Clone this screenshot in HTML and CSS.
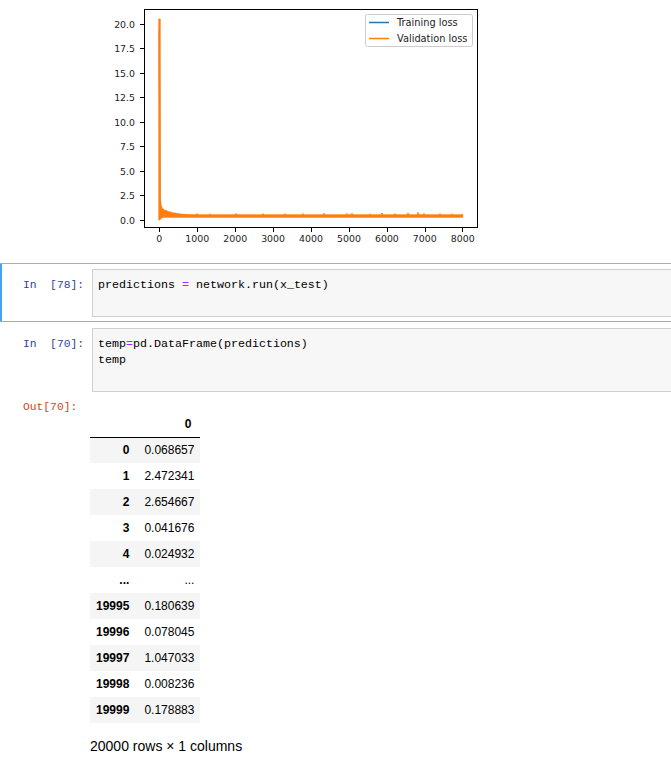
FILE: index.html
```html
<!DOCTYPE html>
<html>
<head>
<meta charset="utf-8">
<link rel="stylesheet" href="styles.css">
</head>
<body>
<div class="fig-out">
  <svg class="plot" width="400" height="255" viewBox="90 0 400 255">
    <rect x="144.5" y="9.5" width="333" height="218" fill="#fff" stroke="#000" stroke-width="1"/>
    <g stroke="#000" stroke-width="1">
      <line x1="140" y1="24.5" x2="144" y2="24.5"/>
      <line x1="140" y1="48.5" x2="144" y2="48.5"/>
      <line x1="140" y1="73.5" x2="144" y2="73.5"/>
      <line x1="140" y1="97.5" x2="144" y2="97.5"/>
      <line x1="140" y1="122.5" x2="144" y2="122.5"/>
      <line x1="140" y1="146.5" x2="144" y2="146.5"/>
      <line x1="140" y1="171.5" x2="144" y2="171.5"/>
      <line x1="140" y1="195.5" x2="144" y2="195.5"/>
      <line x1="140" y1="220.5" x2="144" y2="220.5"/>
      <line x1="159.5" y1="228" x2="159.5" y2="232"/>
      <line x1="197.5" y1="228" x2="197.5" y2="232"/>
      <line x1="235.5" y1="228" x2="235.5" y2="232"/>
      <line x1="273.5" y1="228" x2="273.5" y2="232"/>
      <line x1="311.5" y1="228" x2="311.5" y2="232"/>
      <line x1="349.5" y1="228" x2="349.5" y2="232"/>
      <line x1="387.5" y1="228" x2="387.5" y2="232"/>
      <line x1="425.5" y1="228" x2="425.5" y2="232"/>
      <line x1="462.5" y1="228" x2="462.5" y2="232"/>
    </g>
    <g class="ylab" text-anchor="end">
      <text x="135" y="27.5">20.0</text>
      <text x="135" y="52">17.5</text>
      <text x="135" y="76.5">15.0</text>
      <text x="135" y="101">12.5</text>
      <text x="135" y="125.5">10.0</text>
      <text x="135" y="150">7.5</text>
      <text x="135" y="174.5">5.0</text>
      <text x="135" y="199">2.5</text>
      <text x="135" y="223.5">0.0</text>
    </g>
    <g class="xlab" text-anchor="middle">
      <text x="159.3" y="242">0</text>
      <text x="197.2" y="242">1000</text>
      <text x="235.2" y="242">2000</text>
      <text x="273.1" y="242">3000</text>
      <text x="311" y="242">4000</text>
      <text x="349" y="242">5000</text>
      <text x="386.9" y="242">6000</text>
      <text x="424.8" y="242">7000</text>
      <text x="462.7" y="242">8000</text>
    </g>
    <polyline fill="none" stroke="#1f77b4" stroke-width="1.2" points="159.3,30 159.8,200 161,209 165,212 175,214 190,215.5 462.7,215.8"/>
    <path fill="#ff7f0e" stroke="#ff7f0e" stroke-width="0.8" stroke-linejoin="round" d="M158.8,220 L158.8,19 L160.2,19 L160.4,196 L160.8,203 L161.3,206 L162,207.5 L163,209 L164,209.5 L165,210.5 L166,210 L167,211.5 L168,211 L169,212 L170,212.3 L171,211.8 L172,212.8 L174,213 L176,213.2 L178,213.8 L180,214 L183,214.4 L186,214.6 L196,214.8 L197,213.5 L198,214.8 L209,214.8 L210,213.8 L211,214.8 L235,214.8 L236,213.3 L237,214.8 L262,214.8 L263,213.5 L264,214.8 L284,214.8 L285,213.6 L286,214.8 L302,214.8 L303,213.4 L304,214.8 L323,214.8 L324,213.2 L325,214.8 L346,214.8 L347,213.5 L348,214.8 L351,214.8 L352,213.2 L353,214.8 L369,214.8 L370,213.8 L371,214.8 L381,214.8 L382,213 L383,214.8 L394,214.8 L395,213.5 L396,214.8 L407,214.8 L408,212.8 L409,214.8 L417,214.8 L418,212.3 L419,214.8 L423,214.8 L424,213.3 L425,214.8 L439,214.8 L440,213.6 L441,214.8 L451,214.8 L452,213.7 L453,214.8 L461,214.8 L462,214 L462.7,214.8 L462.7,217.3 L163,217.3 L161,218.5 L159.8,220 Z"/>
    <rect x="365.5" y="14.5" width="107" height="32" rx="2" fill="#fff" fill-opacity="0.8" stroke="#ccc" stroke-width="1"/>
    <line x1="369" y1="22.5" x2="389" y2="22.5" stroke="#1f77b4" stroke-width="1.5"/>
    <line x1="369" y1="38.5" x2="389" y2="38.5" stroke="#ff7f0e" stroke-width="1.5"/>
    <text class="leg" x="397" y="26">Training loss</text>
    <text class="leg" x="397" y="42">Validation loss</text>
  </svg>
</div>

<div class="cell selected">
  <div class="prompt in-prompt">In&nbsp; [78]:</div>
  <div class="input"><pre>predictions <span class="op">=</span> network.run(x_test)</pre></div>
</div>

<div class="cell">
  <div class="prompt in-prompt">In&nbsp; [70]:</div>
  <div class="input"><pre>temp<span class="op">=</span>pd.DataFrame(predictions)
temp</pre></div>
</div>

<div class="output">
  <div class="prompt out-prompt">Out[70]:</div>
  <div class="out-body">
    <table class="df">
      <thead>
        <tr><th class="idx"></th><th class="col">0</th></tr>
      </thead>
      <tbody>
        <tr><th>0</th><td>0.068657</td></tr>
        <tr><th>1</th><td>2.472341</td></tr>
        <tr><th>2</th><td>2.654667</td></tr>
        <tr><th>3</th><td>0.041676</td></tr>
        <tr><th>4</th><td>0.024932</td></tr>
        <tr class="dots"><th>...</th><td>...</td></tr>
        <tr><th>19995</th><td>0.180639</td></tr>
        <tr><th>19996</th><td>0.078045</td></tr>
        <tr><th>19997</th><td>1.047033</td></tr>
        <tr><th>19998</th><td>0.008236</td></tr>
        <tr><th>19999</th><td>0.178883</td></tr>
      </tbody>
    </table>
    <p class="shape">20000 rows × 1 columns</p>
  </div>
</div>
</body>
</html>
```

FILE: styles.css
```css
html, body {
  margin: 0;
  padding: 0;
  background: #fff;
}

body {
  width: 671px;
  overflow: hidden;
  font-family: "Liberation Sans", Arial, sans-serif;
  color: #000;
}

.fig-out {
  height: 263px;
  padding-left: 90px;
}

.plot {
  display: block;
}

.plot text {
  font-family: "DejaVu Sans", sans-serif;
  fill: #222;
}

.ylab text, .xlab text {
  font-size: 9.4px;
}

.leg {
  font-size: 9.8px;
}

.cell {
  display: flex;
  border-top: 1px solid transparent;
  border-bottom: 1px solid transparent;
  padding: 5px 0 4px 0;
}

.cell.selected {
  border-top-color: #ababab;
  border-bottom-color: #ababab;
  box-shadow: inset 2px 0 0 #42a5f5;
}

.prompt {
  width: 92px;
  flex: none;
  box-sizing: border-box;
  padding-left: 23px;
  font-family: "Liberation Mono", monospace;
  font-size: 11.3px;
  line-height: 16px;
  white-space: pre;
}

.in-prompt {
  color: #303f9f;
  padding-top: 8px;
}

.out-prompt {
  color: #d84315;
  padding-top: 2px;
  width: 90px;
}

.input {
  flex: 1;
  background: #f7f7f7;
  border: 1px solid #cfcfcf;
  border-right: none;
  padding: 7px 0 23px 5px;
}

.input pre {
  margin: 0;
  font-family: "Liberation Mono", monospace;
  font-size: 11.67px;
  line-height: 16px;
  color: #000;
}

.op {
  color: #aa22ff;
}

.output {
  display: flex;
  padding-top: 0;
}

.out-body {
  padding-top: 14px;
}

.df {
  border-collapse: collapse;
  font-size: 12px;
  color: #000;
}

.df th, .df td {
  height: 26px;
  padding: 0 6px;
  text-align: right;
  vertical-align: middle;
  box-sizing: border-box;
}

.df th.idx {
  width: 48px;
}

.df tbody th {
  padding-right: 9px;
}

.df td {
  width: 61px;
}

.df thead th {
  border-bottom: 1px solid #000;
  font-weight: bold;
}

.df thead th.col {
  padding-right: 9px;
}

.df tbody th {
  font-weight: bold;
}

.df tbody tr:nth-child(odd) {
  background: #f5f5f5;
}

.df tbody tr.dots {
  background: none;
}

.shape {
  margin: 14px 0 0 0;
  font-size: 14px;
  line-height: 18px;
}
```
